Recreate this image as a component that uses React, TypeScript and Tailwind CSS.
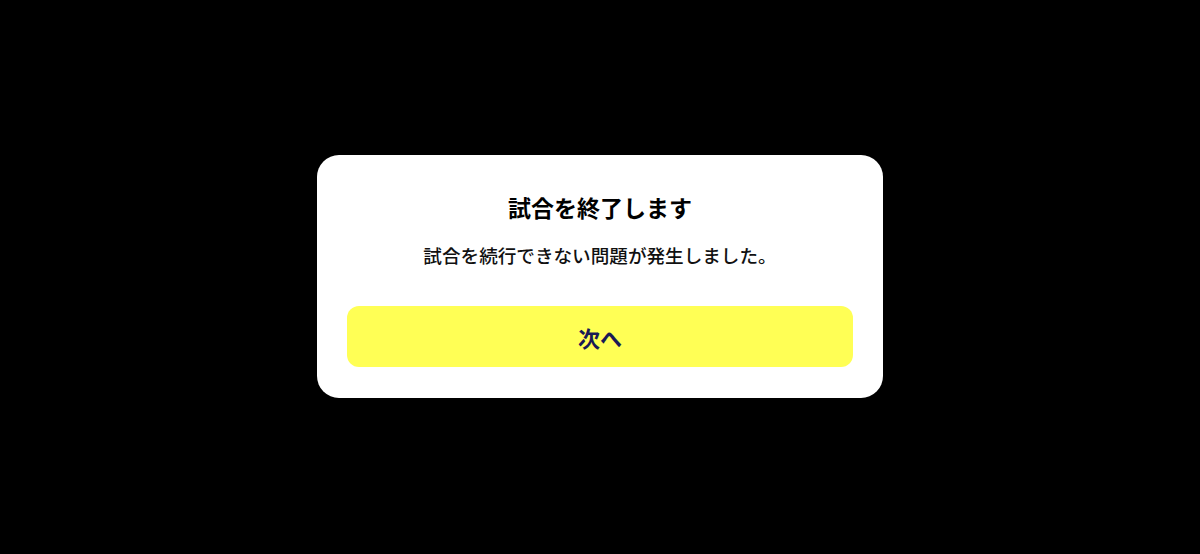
import React from "react";

export default function App() {
  return (
    <div
      className="w-[1200px] h-[554px] bg-black flex items-center justify-center"
      style={{ fontFamily: '"Noto Sans CJK JP", "Noto Sans", sans-serif' }}
    >
      <div className="w-[566px] h-[243px] mt-[-2px] bg-white rounded-[22px] flex flex-col items-center px-[30px] pt-[38px]">
        <h1 className="text-[23px] leading-[28px] font-bold text-black">試合を終了します</h1>
        <p className="mt-[22px] text-[18.6px] leading-[24px] font-medium text-[#111]">試合を続行できない問題が発生しました。</p>
        <button className="mt-[39px] w-full h-[61px] rounded-[12px] bg-[#ffff55] text-[22px] leading-[22px] font-bold text-[#1a1a55] pt-[1px]">
          次へ
        </button>
      </div>
    </div>
  );
}
